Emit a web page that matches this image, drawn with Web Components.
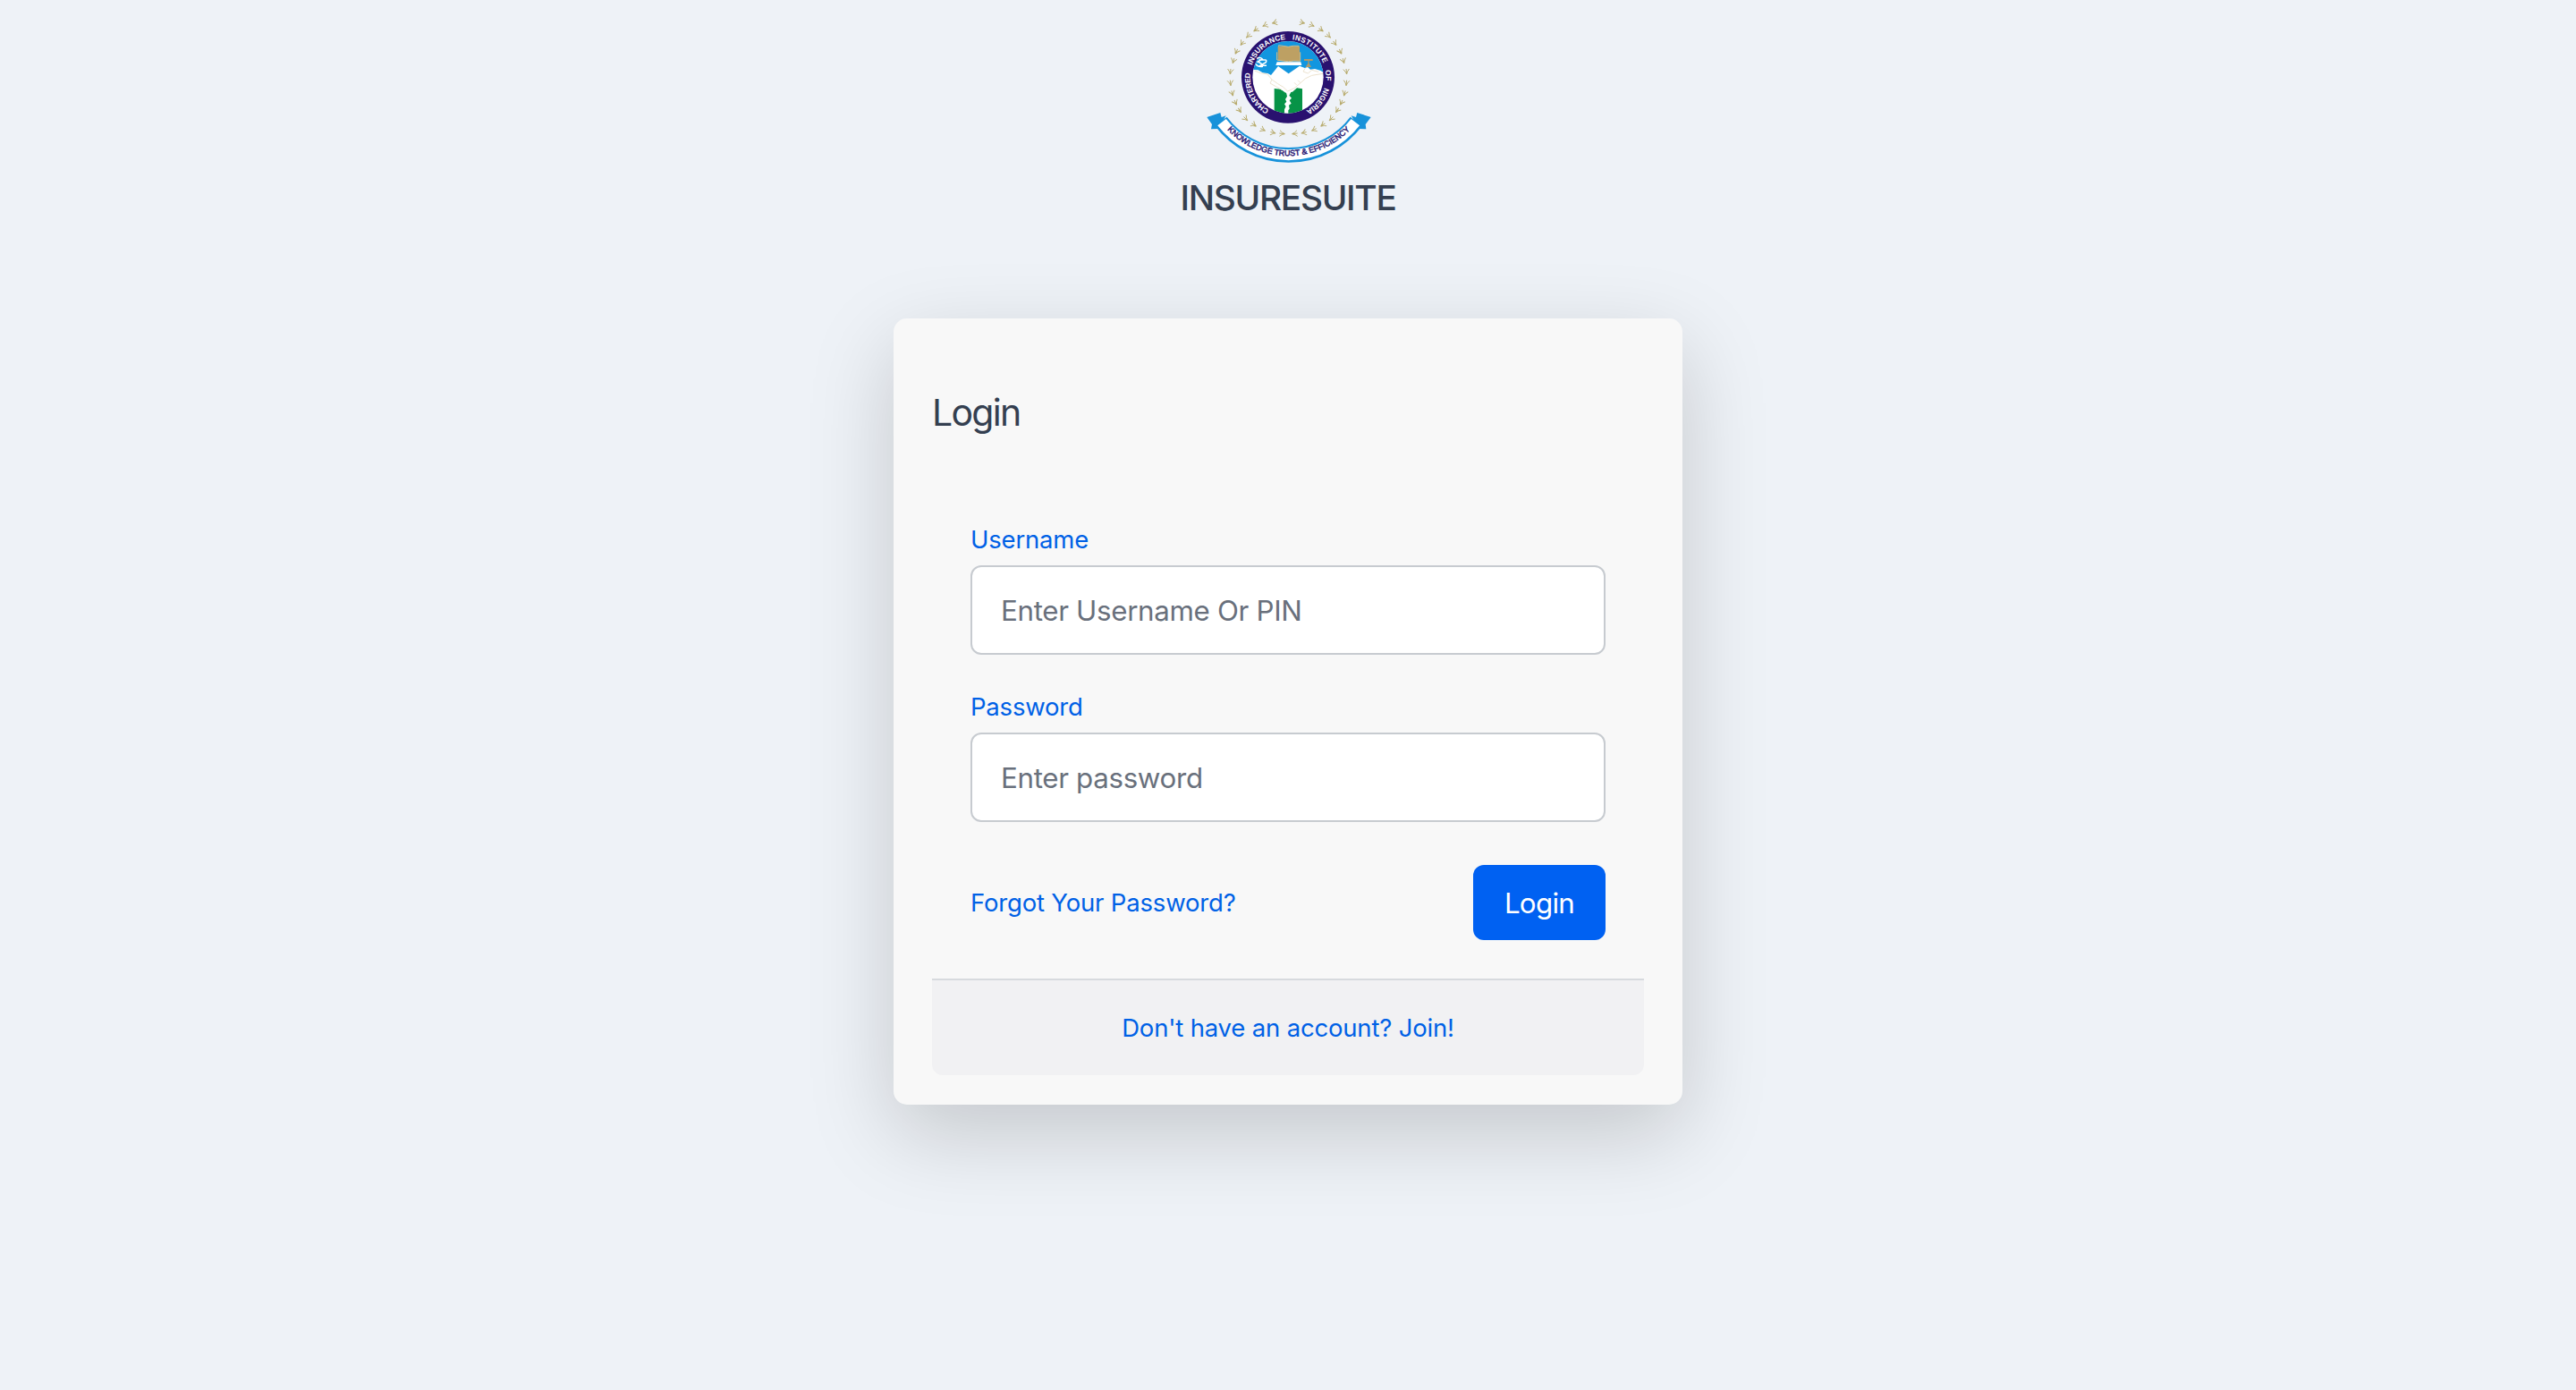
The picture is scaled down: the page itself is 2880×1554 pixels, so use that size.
<!DOCTYPE html>
<html lang="en">
<head>
<meta charset="utf-8">
<title>InsureSuite</title>
<style>
html{background:#eef2f7}
body{margin:0;min-height:1554px;background:#eef2f7;font-family:Inter,"Liberation Sans",sans-serif;color:#343f50}
</style>
</head>
<body>
<login-page></login-page>
<script>
const define = (name, html, setup) => {
  const tpl = document.createElement('template');
  tpl.innerHTML = html;
  customElements.define(name, class extends HTMLElement {
    constructor() {
      super();
      this.attachShadow({mode: 'open'}).append(tpl.content.cloneNode(true));
    }
    connectedCallback() { if (setup) setup(this, this.shadowRoot); }
  });
};

/* Laurel leaves: the left branch, mirrored for the right one. */
const leaves = [[285,61],[253,70],[222,85],[197,105],[176,130],[157,158],[147,189],[137,225],[137,263],[143,298],[154,329],[168,355],[188,383],[216,404],[246,420],[280,430],[310,433]];
const leaf = (x, y, flip) => {
  const dx = x - 331, dy = y - 243;
  const a = Math.atan2(-dx, dy) * 180 / Math.PI;
  return `<g transform="${flip ? 'translate(663 0) scale(-1 1) ' : ''}translate(${x} ${y}) rotate(${a.toFixed(1)})"><path d="M9 0Q0 -2 -8 -10M9 0H-9M9 0Q0 2 -8 10"/></g>`;
};

define('institute-crest', `
<style>
:host{display:block;width:220px;height:190px}
svg{display:block}
text{font-family:"Liberation Sans",sans-serif}
</style>
<svg width="220" height="190" viewBox="0 0 660 570">
  <defs>
    <path id="ring" d="M330 371A127 127 0 0 1 330 117A127 127 0 0 1 330 371"/>
    <path id="motto" d="M72 341A286 286 0 0 0 592 341"/>
    <clipPath id="disc"><ellipse cx="330" cy="244" rx="119" ry="121"/></clipPath>
  </defs>
  <g fill="none" stroke="#b7aa6b" stroke-width="2.8">${leaves.map(l => leaf(l[0], l[1], 0) + leaf(l[0], l[1], 1)).join('')}</g>
  <ellipse cx="330" cy="244" rx="156" ry="154" fill="#29116f"/>
  <ellipse cx="330" cy="244" rx="119" ry="121" fill="#fff"/>
  <g clip-path="url(#disc)">
    <path d="M205 115H455V231L438 221L420 216L405 218L396 210L386 213L369 206L332 232L297 207L273 237L262 231L245 229L230 220L205 218Z" fill="#1296df"/>
    <path d="M284 282L305 284L322 296L345 293L360 280L378 283V370H284Z" fill="#079347"/>
    <path d="M323 292L340 294L334 305L342 314L335 322L341 332L333 338L335 350L331 355V368H318V352L323 342L318 334L325 326L321 318L327 308Z" fill="#fff"/>
    <path d="M218 222L238 230L261 234L276 252L296 266L314 277L329 291L351 281L372 263L389 248L410 238L447 232M276 252L270 264L289 275L309 286M388 213L381 225L397 231L410 220L433 226M359 270L351 262M372 263L363 254" fill="none" stroke="#ece2cf" stroke-width="3"/>
  </g>
  <rect x="296" y="141" width="73" height="48" fill="#bda063"/>
  <path d="M299 141V137Q316 139 331 142Q348 137 366 139V142M293 160V186Q315 190 331 191Q350 188 371 190V160" fill="none" stroke="#d5bd89" stroke-width="3"/>
  <path d="M293 193H373L376 204H289Z" fill="#fff"/>
  <path d="M384 183H413V189H384ZM397 188H401V197L408 210H389L397 197Z" fill="#ad9a6b"/>
  <path d="M225 181Q237 175 244 183L226 194M232 186H252Q260 185 256 194L237 205H258M222 200Q229 211 246 208M230 192L247 203" fill="none" stroke="#fff" stroke-width="4.5"/>
  <g fill="#fff" font-size="25" font-weight="700">
    <text><textPath href="#ring" startOffset="67" textLength="147">CHARTERED</textPath></text>
    <text><textPath href="#ring" startOffset="240" textLength="151">INSURANCE</textPath></text>
    <text><textPath href="#ring" startOffset="413" textLength="138">INSTITUTE</textPath></text>
    <text><textPath href="#ring" startOffset="575" textLength="35">OF</textPath></text>
    <text><textPath href="#ring" startOffset="634" textLength="101">NIGERIA</textPath></text>
  </g>
  <path d="M58 378L103 363L107 378L122 373L96 417L72 418L75 402ZM608 378L562 363L558 378L542 373L568 417L592 418L590 402Z" fill="#1792da"/>
  <path d="M105 392A284 284 0 0 0 559 392" fill="none" stroke="#1792da" stroke-width="50"/>
  <path d="M108 395A284 284 0 0 0 556 395" fill="none" stroke="#fff" stroke-width="36"/>
  <text fill="#2b1a74" stroke="#2b1a74" stroke-width="1.4" font-size="27"><textPath href="#motto" startOffset="50%" text-anchor="middle" textLength="460" lengthAdjust="spacingAndGlyphs">KNOWLEDGE TRUST &amp; EFFICIENCY</textPath></text>
</svg>`);

define('brand-header', `
<style>
:host{display:flex;flex-direction:column;align-items:center;padding-top:5px}
h1{margin:2px 0 0;font-size:38.8px;line-height:48px;font-weight:530;letter-spacing:-1.3px;white-space:nowrap}
</style>
<institute-crest></institute-crest>
<h1><slot></slot></h1>`);

define('form-field', `
<style>
:host{display:flex;flex-direction:column;gap:8px}
label{font-size:27.5px;line-height:42px;font-weight:430;color:#0061e6;letter-spacing:-.2px}
input{box-sizing:border-box;width:100%;height:100px;margin:0;padding:2px 32px 0;border:2px solid #c7cbd0;border-radius:12px;background:#fff;font:430 31.3px Inter,sans-serif;letter-spacing:-.33px;outline:0}
input::placeholder{color:#69707c;opacity:1}
</style>
<label for="control"><slot></slot></label>
<input id="control">`, (host, root) => {
  const input = root.querySelector('input');
  input.type = host.getAttribute('type') || 'text';
  input.placeholder = host.getAttribute('hint');
});

define('text-link', `
<style>
:host{display:block;font-size:27.5px;line-height:42px;font-weight:430;letter-spacing:-.18px}
a{color:#0061e6;text-decoration:none;white-space:nowrap}
</style>
<a href="#"><slot></slot></a>`);

define('primary-button', `
<style>
:host{display:block}
button{display:block;box-sizing:border-box;width:148px;height:84px;padding:1px 0 0;border:0;border-radius:12px;background:#0061f2;color:#fff;font:430 31.3px Inter,sans-serif;letter-spacing:-.7px}
</style>
<button type="button"><slot></slot></button>`);

define('login-card', `
<style>
:host{display:flex;flex-direction:column;box-sizing:border-box;width:882px;height:879px;margin-top:111px;padding:80px 43px 32px;border-radius:15px;background:#f8f8f8;box-shadow:0 32px 96px rgba(0,0,0,.175)}
h2{margin:0;font-size:41px;line-height:50px;font-weight:380;letter-spacing:-1.7px}
form{display:flex;flex-direction:column;gap:37px;padding:96px 43px 43px}
.actions{display:flex;align-items:center;justify-content:space-between;margin-top:11px}
footer{display:flex;align-items:center;justify-content:center;box-sizing:border-box;height:108px;border-top:2px solid #d7dade;border-radius:0 0 12px 12px;background:#f1f1f3}
</style>
<h2>Login</h2>
<form>
  <form-field hint="Enter Username Or PIN">Username</form-field>
  <form-field type="password" hint="Enter password">Password</form-field>
  <div class="actions">
    <text-link>Forgot Your Password?</text-link>
    <primary-button>Login</primary-button>
  </div>
</form>
<footer><text-link>Don't have an account? Join!</text-link></footer>`);

define('login-page', `
<style>:host{display:flex;flex-direction:column;align-items:center}</style>
<brand-header>INSURESUITE</brand-header>
<login-card></login-card>`);
</script>
</body>
</html>
